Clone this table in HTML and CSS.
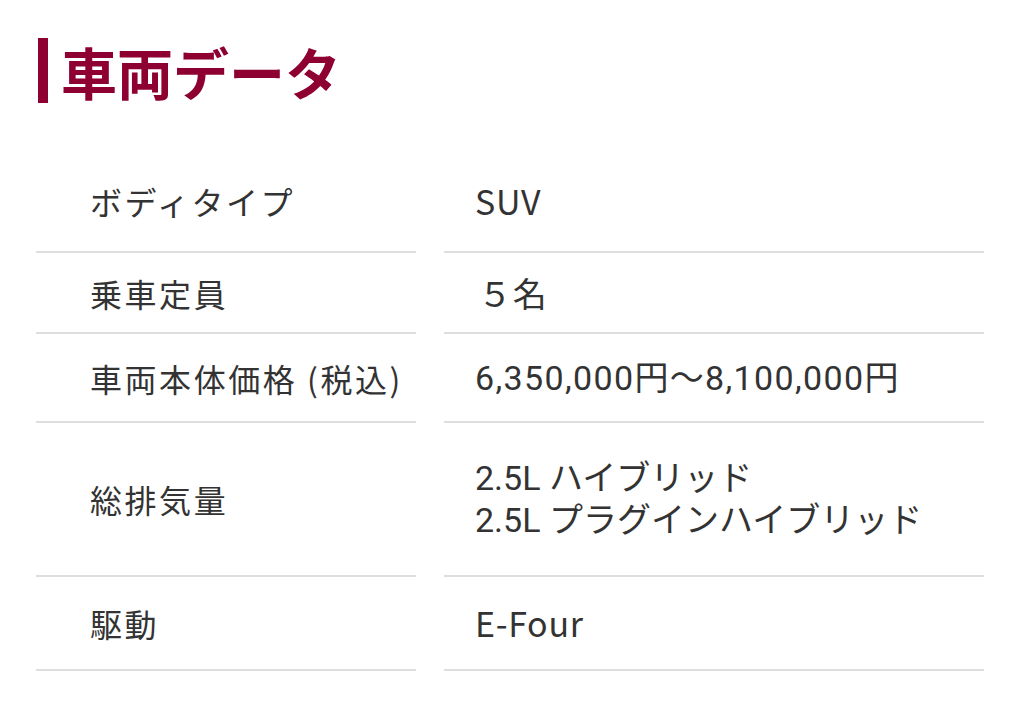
FILE: index.html
```html
<!DOCTYPE html>
<html lang="ja">
<head>
<meta charset="utf-8">
<title>車両データ</title>
<link rel="stylesheet" href="styles.css">
</head>
<body>
<section class="spec">
  <h2 class="spec-title">車両データ</h2>
  <dl class="spec-table">
    <div class="spec-row row-body">
      <dt class="spec-label">ボディタイプ</dt>
      <dd class="spec-value">SUV</dd>
    </div>
    <div class="spec-row row-seat">
      <dt class="spec-label">乗車定員</dt>
      <dd class="spec-value seat">５名</dd>
    </div>
    <div class="spec-row row-price">
      <dt class="spec-label">車両本体価格 (税込)</dt>
      <dd class="spec-value num price">6,350,000円〜8,100,000円</dd>
    </div>
    <div class="spec-row row-engine">
      <dt class="spec-label">総排気量</dt>
      <dd class="spec-value num engine">2.5L ハイブリッド<br>2.5L プラグインハイブリッド</dd>
    </div>
    <div class="spec-row row-drive">
      <dt class="spec-label">駆動</dt>
      <dd class="spec-value">E-Four</dd>
    </div>
  </dl>
</section>
</body>
</html>
```
FILE: styles.css
```css
html, body {
  margin: 0;
  padding: 0;
  background: #ffffff;
}

.spec {
  padding: 38px 40px 0 36px;
  font-family: "Noto Sans CJK JP", "Noto Sans", sans-serif;
  color: #333333;
}

.spec-title {
  margin: 0 0 47px 2px;
  border-left: 10px solid #8e0031;
  padding-left: 13px;
  height: 65px;
  line-height: 65px;
  font-size: 56px;
  font-weight: 700;
  color: #8e0031;
  letter-spacing: 0;
}

.spec-table {
  margin: 0;
  display: flex;
  flex-direction: column;
}

.spec-row {
  display: grid;
  grid-template-columns: 380px 540px;
  column-gap: 28px;
}

.spec-label,
.spec-value {
  margin: 0;
  display: flex;
  align-items: center;
  box-sizing: border-box;
  border-bottom: 2px solid #dedede;
  line-height: 42px;
}

.spec-label {
  padding-left: 54px;
  font-size: 32px;
  letter-spacing: 0.08em;
}

.spec-value {
  padding-left: 31px;
  font-size: 34px;
  letter-spacing: 0.02em;
}

.spec-value.seat {
  padding-left: 34px;
}

.spec-value.num {
  font-family: Roboto, "Noto Sans CJK JP", sans-serif;
}

.spec-value.price {
  letter-spacing: 0.04em;
}

.spec-value.engine {
  letter-spacing: 0;
}

.row-body { height: 103px; }
.row-seat { height: 81px; }
.row-price { height: 89px; }
.row-engine { height: 154px; }
.row-drive { height: 94px; }
```
